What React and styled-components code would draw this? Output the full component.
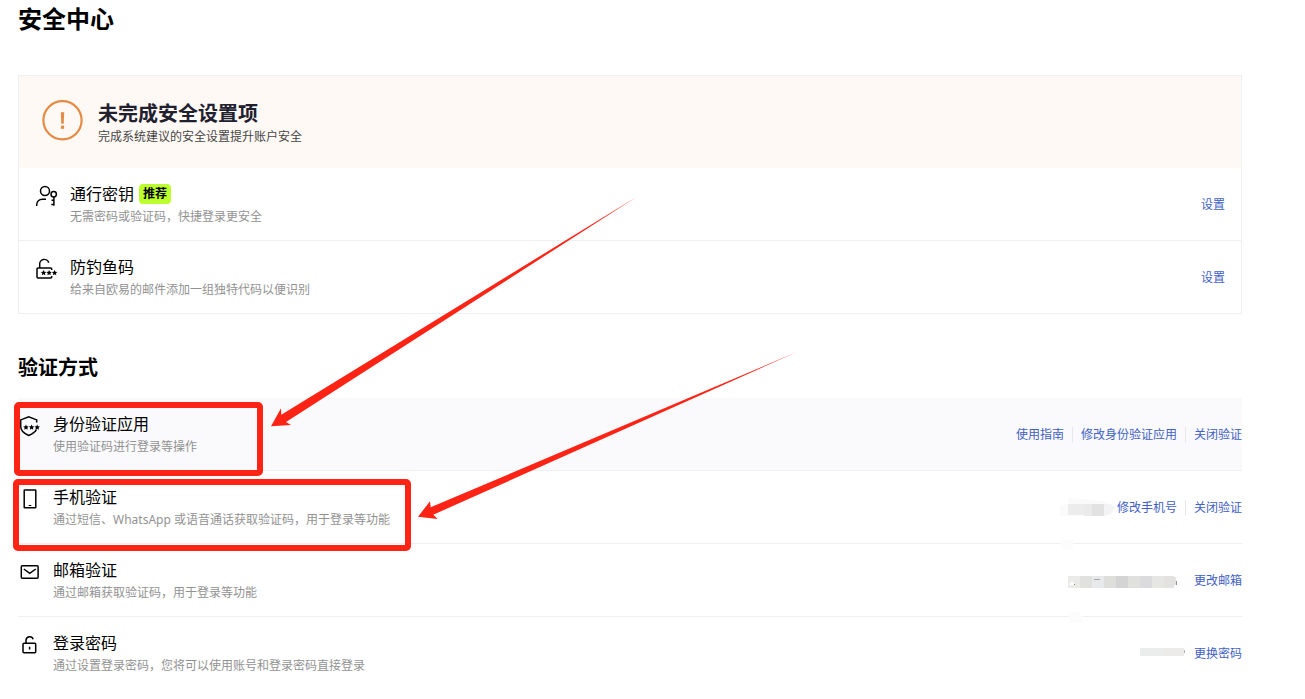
import React from "react";
import styled, { createGlobalStyle } from "styled-components";

const GlobalStyle = createGlobalStyle`
  *, *::before, *::after { box-sizing: border-box; }
  body {
    margin: 0;
    background: #fff;
    color: #000;
    font-family: "Noto Sans", "Noto Sans CJK SC", sans-serif;
  }
`;

const Page = styled.main`
  position: relative;
  padding: 0 63px 8px 18px;
`;

const PageTitle = styled.h1`
  margin: 0 0 37px;
  font-size: 24px;
  line-height: 38px;
  font-weight: 700;
`;

const SectionTitle = styled.h2`
  margin: 40px 0 16px;
  font-size: 20px;
  line-height: 28px;
  font-weight: 700;
`;

const Card = styled.section`
  border: 1px solid #edeff2;
`;

const Banner = styled.header`
  display: flex;
  align-items: flex-start;
  gap: 15px;
  padding: 24px 23px 22px;
  background: #fff9f6;
`;

const BannerTitle = styled.h2`
  margin: 0;
  font-size: 20px;
  line-height: 28px;
  font-weight: 700;
  color: #21202f;
`;

const BannerText = styled.p`
  margin: 0;
  font-size: 12px;
  line-height: 18px;
  color: #454545;
`;

const List = styled.ul`
  margin: 0;
  padding: 0;
  list-style: none;
`;

const Row = styled.li`
  display: flex;
  align-items: center;
  gap: 11px;
  padding: 14px ${(p) => (p.$inset ? "16px" : "0")} 12px;
  background: ${(p) => (p.$active ? "#fafafc" : "transparent")};
  border-bottom: 1px solid #edeff2;
  &:last-child { border-bottom: 0; }
`;

const IconSvg = styled.svg`
  flex: none;
  align-self: flex-start;
  margin-top: 2px;
`;

const RowBody = styled.div`
  flex: 1;
  min-width: 0;
`;

const RowTitle = styled.h3`
  display: flex;
  align-items: center;
  gap: 5px;
  margin: 0;
  font-size: 16px;
  line-height: 24px;
  font-weight: 400;
`;

const RowText = styled.p`
  margin: 0;
  font-size: 12px;
  line-height: 22px;
  color: #929292;
`;

const Badge = styled.span`
  padding: 0 4px;
  border-radius: 4px;
  background: #bcff2f;
  font-size: 12px;
  line-height: 20px;
  font-weight: 700;
`;

const Actions = styled.div`
  display: flex;
  align-items: center;
  line-height: 16px;
`;

const ActionLink = styled.a`
  font-size: 12px;
  line-height: 16px;
  color: #3f60c4;
  text-decoration: none;
  & + & {
    margin-left: 8px;
    padding-left: 8px;
    border-left: 1px solid #e6e8ec;
  }
`;

const MaskSvg = styled.svg`
  flex: none;
  overflow: visible;
  margin-right: ${(p) => p.$gap}px;
`;

const Annotations = styled.svg`
  position: absolute;
  top: 0;
  left: 0;
  pointer-events: none;
`;

function star(cx, cy) {
  const pts = [];
  for (let i = 0; i < 10; i += 1) {
    const r = i % 2 ? 1.4 : 2.9;
    const a = -Math.PI / 2 + (i * Math.PI) / 5;
    pts.push(`${(cx + r * Math.cos(a)).toFixed(2)},${(cy + r * Math.sin(a)).toFixed(2)}`);
  }
  return <polygon key={cx} points={pts.join(" ")} fill="#000" stroke="none" />;
}

const drawings = {
  passkey: (
    <>
      <circle cx="10" cy="7" r="4.5" />
      <path d="M1.7 22v-1.2a5.6 5.6 0 0 1 5.6-5.6H11" />
      <circle cx="18.7" cy="10.2" r="2.7" />
      <path d="M18.9 13v8.8M18.5 16.2h-2M18.5 20.4h-2.2" />
    </>
  ),
  code: (
    <>
      <path d="M4.7 11V7.6a4.6 4.6 0 0 1 9-1.8" />
      <path d="M16.7 13v-1a1 1 0 0 0-1-1H3a1 1 0 0 0-1 1v8a1 1 0 0 0 1 1h12.7a1 1 0 0 0 1-1v-1" />
      {[8.6, 14.1, 19.6].map((x) => star(x, 15.9))}
    </>
  ),
  shield: (
    <>
      <path d="M18.7 8.6V5.9l-8-3.2-8 3.2v6.6c0 4.2 3.3 7 8 9 3.9-1.7 6.6-3.3 7.7-6" />
      {[8, 13.6, 19.2].map((x) => star(x, 13.3))}
    </>
  ),
  phone: (
    <>
      <rect x="6.2" y="3" width="11.6" height="17.8" rx=".5" />
      <path d="M10.7 18.5h2.6" strokeWidth="1" />
    </>
  ),
  mail: (
    <>
      <rect x="3.3" y="5.7" width="16.8" height="12.6" rx="1" />
      <path d="M5.8 9l5.9 4.3L17.8 9" />
    </>
  ),
  lock: (
    <>
      <rect x="5" y="10.2" width="12.7" height="9.6" rx="1" />
      <path d="M8 10V7.5a3.7 3.7 0 0 1 7.2-1.2M11.6 13.8v2.8" />
    </>
  ),
};

function Icon({ name }) {
  return (
    <IconSvg width="24" height="24" viewBox="0 0 24 24" fill="none" stroke="#000" strokeWidth="1.5" aria-hidden="true">
      {drawings[name]}
    </IconSvg>
  );
}

function PhoneMask() {
  return (
    <MaskSvg $gap={2} width="55" height="20" viewBox="0 0 55 20" aria-hidden="true">
      <path d="M0 8l8-2 1-6 24 2 10 1 10 5-5 8H36L8 18H0z" fill="#fafafa" />
      <rect x="8" y="6" width="36" height="11" fill="#ececec" />
      <rect x="24" y="6" width="8" height="12" fill="#eaeaea" />
      <rect x="32" y="6" width="12" height="12" fill="#e2e2e2" />
      <path d="M44 6h6l5 3-4 7-7 2z" fill="#f3f3f5" />
      <path d="M0 42h13v9H3z" fill="#fcfcfc" />
    </MaskSvg>
  );
}

const mailTones = ["#eaeae8", "#e1e1df", "#e8e9eb", "#dededc", "#d4d4d4", "#e0e0df", "#dbdbde", "#e6e6e4", "#e4e2e0"];

function MailMask() {
  return (
    <MaskSvg $gap={16} width="110" height="14" viewBox="0 -2 110 14" aria-hidden="true">
      {mailTones.map((tone, i) => (
        <rect key={i} x={i * 12} width={i === 8 ? 10 : 12} height="12" fill={tone} />
      ))}
      <path d="M106 1h2v8h-2z" fill="#e4e2e0" />
      <path d="M2 9l2-2 2 2" fill="none" stroke="#fff" strokeWidth="2" />
      <rect x="6" y="8" width="1" height="1" fill="#8c8573" />
      <rect x="26" y="3" width="6" height="1" fill="#a5a5a5" />
      <rect x="108" y="5" width="1" height="4" fill="#8a929c" />
      <path d="M-1 36h13l4 11H3z" fill="#fcfcfc" />
    </MaskSvg>
  );
}

function PasswordMask() {
  return (
    <MaskSvg $gap={8} width="46" height="12" viewBox="0 0 46 12" aria-hidden="true">
      <rect width="24" height="8" fill="#ebecec" />
      <rect x="24" width="20" height="8" fill="#ecebe9" />
      <rect x="44" y="2" width="1" height="3" fill="#a9b3bf" />
    </MaskSvg>
  );
}

const pending = [
  { icon: "passkey", title: "通行密钥", badge: "推荐", text: "无需密码或验证码，快捷登录更安全", links: ["设置"] },
  { icon: "code", title: "防钓鱼码", text: "给来自欧易的邮件添加一组独特代码以便识别", links: ["设置"] },
];

const methods = [
  {
    icon: "shield",
    title: "身份验证应用",
    text: "使用验证码进行登录等操作",
    links: ["使用指南", "修改身份验证应用", "关闭验证"],
    active: true,
  },
  {
    icon: "phone",
    title: "手机验证",
    text: "通过短信、WhatsApp 或语音通话获取验证码，用于登录等功能",
    mask: <PhoneMask />,
    links: ["修改手机号", "关闭验证"],
  },
  { icon: "mail", title: "邮箱验证", text: "通过邮箱获取验证码，用于登录等功能", mask: <MailMask />, links: ["更改邮箱"] },
  {
    icon: "lock",
    title: "登录密码",
    text: "通过设置登录密码，您将可以使用账号和登录密码直接登录",
    mask: <PasswordMask />,
    links: ["更换密码"],
  },
];

function SettingRow({ item, inset }) {
  return (
    <Row $inset={inset} $active={item.active}>
      <Icon name={item.icon} />
      <RowBody>
        <RowTitle>
          {item.title}
          {item.badge && <Badge>{item.badge}</Badge>}
        </RowTitle>
        <RowText>{item.text}</RowText>
      </RowBody>
      <Actions>
        {item.mask}
        {item.links.map((label) => (
          <ActionLink key={label} href="#">{label}</ActionLink>
        ))}
      </Actions>
    </Row>
  );
}

export default function App() {
  return (
    <>
      <GlobalStyle />
      <Page>
        <PageTitle>安全中心</PageTitle>
        <Card>
          <Banner>
            <svg width="41" height="41" viewBox="0 0 41 41" aria-hidden="true">
              <circle cx="20.5" cy="20.2" r="19.1" fill="none" stroke="#e58a43" strokeWidth="2.2" />
              <path d="M18.8 12.3h3.4l-.5 11.4h-2.4z" fill="#e58a43" />
              <rect x="18.9" y="25.6" width="3.2" height="3.2" fill="#e58a43" />
            </svg>
            <div>
              <BannerTitle>未完成安全设置项</BannerTitle>
              <BannerText>完成系统建议的安全设置提升账户安全</BannerText>
            </div>
          </Banner>
          <List>
            {pending.map((item) => <SettingRow key={item.title} item={item} inset />)}
          </List>
        </Card>
        <SectionTitle>验证方式</SectionTitle>
        <List>
          {methods.map((item) => <SettingRow key={item.title} item={item} />)}
        </List>
        <Annotations width="820" height="560" viewBox="0 0 820 560" aria-hidden="true">
          <g fill="none" stroke="#fd2315" strokeWidth="6">
            <rect x="17" y="405" width="243" height="68" rx="2" />
            <rect x="16" y="482" width="392" height="66" rx="2" />
          </g>
          <g fill="#fd2315">
            <path d="M638 196L281.3 414.7L281 408.3L271 426.2L291 425L286 422z" />
            <path d="M798 351.5L430.7 507.3L430 501.3L418 516.8L437.7 519L433.3 514.7z" />
          </g>
        </Annotations>
      </Page>
    </>
  );
}
